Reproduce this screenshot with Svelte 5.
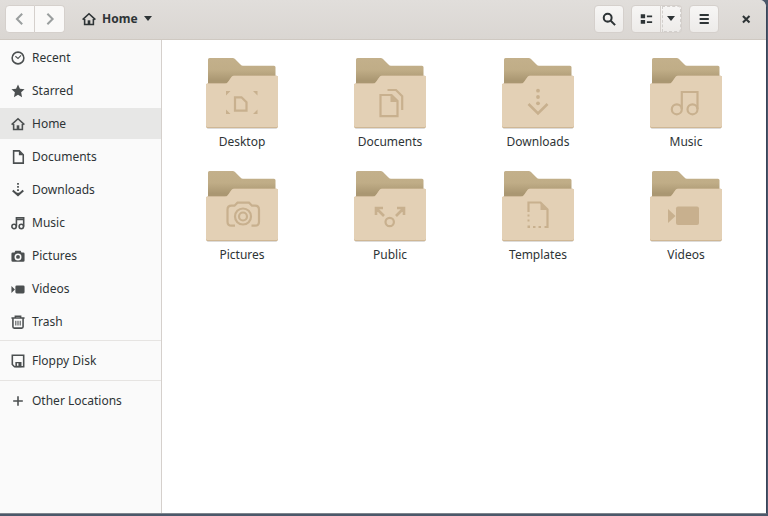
<script lang="ts">
    let current = $state("Home");

    const places = ["Recent", "Starred", "Home", "Documents", "Downloads", "Music", "Pictures", "Videos", "Trash"];
    const folders = ["Desktop", "Documents", "Downloads", "Music", "Pictures", "Public", "Templates", "Videos"];
</script>

<svelte:head><title>Home</title></svelte:head>

{#snippet icon(name: string)}
    <svg class="icon" viewBox="0 0 16 16" aria-hidden="true">
        {#if name == "Recent"}
            <circle cx="8" cy="8" r="6.7" class="line"/>
            <path d="M5 6l3 2.5L11.5 5" class="line thin"/>
        {:else if name == "Starred"}
            <path d="M8 .5l2.2 4.8 5.3.6-3.9 3.6 1 5.5L8 12.4 3.4 15l1-5.5L.5 5.9l5.3-.6z"/>
        {:else if name == "Home"}
            <path d="M.7 8.8L8 2l7.3 6.8M3 8v6.3h10V8" class="line"/>
            <path d="M6.5 14V9.5h3V14z"/>
        {:else if name == "Documents"}
            <path d="M3 1h6.5L14 5.5V15H3z" class="line"/>
            <path d="M9 1v5h5z"/>
        {:else if name == "Downloads"}
            <path d="M7 0h2v2H7zM7 3.500h2v2H7zM7 7h2v2H7z"/>
            <path d="M2 8.500l6 5.500 6-5.500" class="line bold"/>
            <path d="M5.500 11h5L8 14z"/>
        {:else if name == "Music"}
            <circle cx="3.5" cy="12" r="2.5" class="line"/>
            <circle cx="11.8" cy="12" r="2.5" class="line"/>
            <path d="M6.2 12V2h8.300v10M6.200 4h8" class="line"/>
        {:else if name == "Pictures"}
            <path fill-rule="evenodd" d="M5 2h6l1 2h2q1.500 0 1.500 1.500V13q0 1.500-1.500 1.500H2Q.5 14.500.5 13V5.500Q.5 4 2 4h2zM8 5a4 4 0 1 0 0 8 4 4 0 0 0 0-8z"/>
            <circle cx="8" cy="9" r="2.2"/>
        {:else if name == "Videos"}
            <rect x="5" y="4" width="10.5" height="9" rx="1.5"/>
            <path d="M.5 4.500v8L4.500 8.500z"/>
        {:else if name == "Trash"}
            <path d="M.5 3.500h15M5 3V1.500h6V3M2.200 4v9.500q0 1.500 1.500 1.500h8.600q1.500 0 1.500-1.500V4" class="line"/>
            <path d="M5.500 6.500v5.500M8 6.500v5.500M10.500 6.500v5.500" class="line thin"/>
        {:else if name == "Floppy Disk"}
            <path d="M1.500 1.500h13v13H4l-2.500-2.500z" class="line"/>
            <path fill-rule="evenodd" d="M5 9h7v6H5zM6.800 10.500v3h1.700v-3z"/>
        {:else if name == "Other Locations"}
            <path d="M8 2.500v11M2.500 8h11" class="line"/>
        {/if}
    </svg>
{/snippet}

{#snippet emblem(name: string)}
    <g class="emblem">
        {#if name == "Desktop"}
            <path class="solid" d="M20 34h4.500L20 38.500zM51.500 34H47l4.500 4.500zM20 57h4.500L20 52.500zM51.500 57H47l4.500-4.500z"/>
            <path d="M29 40.300h6.500l5 5v8.400H29z"/>
        {:else if name == "Documents"}
            <path d="M26.500 38h11l6 6v15.200h-17z"/>
            <path class="solid" d="M36.500 38v7h7z"/>
            <path d="M33.500 33h8.500l6.200 6.200V53"/>
        {:else if name == "Downloads"}
            <circle class="solid" cx="36" cy="33.7" r="1.9"/>
            <circle class="solid" cx="36" cy="40" r="1.9"/>
            <circle class="solid" cx="36" cy="46.3" r="1.9"/>
            <path class="thick" d="M26.500 47l9.500 9.500 9.500-9.500"/>
        {:else if name == "Music"}
            <circle cx="26.8" cy="52.3" r="5"/>
            <circle cx="42.5" cy="52.3" r="5"/>
            <path d="M31.800 52V35h15.700v17"/>
        {:else if name == "Pictures"}
            <path d="M29 55.700h-3.500q-4 0-4-4v-12q0-4 4-4h3l3-3h11.500l3 3h3q4 0 4 4v12q0 4-4 4h-3.500"/>
            <circle cx="37" cy="46.5" r="8"/>
            <circle cx="37" cy="46.5" r="4"/>
        {:else if name == "Public"}
            <circle cx="35.7" cy="52" r="4.2"/>
            <path class="thick" d="M22 45v-7h7M22 38l8 8M50 45v-7h-7M50 38l-8 8"/>
        {:else if name == "Templates"}
            <path d="M26.500 42v-9.500h12l7 7V57h-3"/>
            <path class="solid" d="M38.500 32v8h7zM25.500 44.500h2v2h-2zM25.500 49.500h2v2h-2zM25.500 55.500h2.500v2.500h-2.500zM31 56h2.500v2H31zM36.500 56h2.500v2h-2.500z"/>
        {:else}
            <rect class="solid" x="26" y="36.5" width="23" height="18.5" rx="2"/>
            <path class="solid" d="M18 39l7.500 7-7.500 7z"/>
        {/if}
    </g>
{/snippet}

{#snippet place(name: string)}
    <li>
        <a href="#{name}" class:current={current == name} onclick={() => current = name}>
            {@render icon(name)}
            {name}
        </a>
    </li>
{/snippet}

<div class="window">
    <header>
        <div class="linked">
            <button disabled aria-label="Back"><svg class="icon" viewBox="0 0 16 16"><path d="M10.500 2L4.500 8l6 6" class="line bold"/></svg></button>
            <button disabled aria-label="Forward"><svg class="icon" viewBox="0 0 16 16"><path d="M5 2l6 6-6 6" class="line bold"/></svg></button>
        </div>
        <button class="path">
            {@render icon("Home")}
            Home
            <svg class="arrow" viewBox="0 0 8 5"><path d="M0 0h8L4 5z"/></svg>
        </button>

        <div class="tools">
            <button aria-label="Search">
                <svg class="icon" viewBox="0 0 16 16"><circle cx="6.5" cy="6.5" r="4.5" class="line bold"/><path d="M10 10l5 5" class="line bold"/></svg>
            </button>
            <div class="linked">
                <button aria-label="List view">
                    <svg class="icon" viewBox="0 0 16 16"><path d="M2 2.500h5v4.500H2zM2 9h5v4.500H2zM9 4h6v2H9zM9 10.500h6v2H9z"/></svg>
                </button>
                <button class="narrow" aria-label="View options"><svg class="arrow" viewBox="0 0 8 5"><path d="M0 0h8L4 5z"/></svg></button>
            </div>
            <button aria-label="Menu">
                <svg class="icon" viewBox="0 0 16 16"><path d="M3 3.500h10.500M3 8h10.500M3 12.500h10.500" class="line bold"/></svg>
            </button>
            <button class="close" aria-label="Close">
                <svg class="icon" viewBox="0 0 16 16"><path d="M4.500 4.500l7.500 7.500M12 4.500L4.500 12" class="line bold"/></svg>
            </button>
        </div>
    </header>

    <div class="content">
        <nav>
            <ul>
                {#each places as name}
                    {@render place(name)}
                {/each}
            </ul>
            <ul>{@render place("Floppy Disk")}</ul>
            <ul>{@render place("Other Locations")}</ul>
        </nav>

        <main>
            {#each folders as name}
                <a class="folder" href="#{name}">
                    <svg viewBox="0 0 72 72" aria-hidden="true">
                        <defs>
                            <linearGradient id="back" x2="0" y2="1">
                                <stop offset="0" stop-color="#c3b08b"/>
                                <stop offset=".2" stop-color="#c0ad87"/>
                                <stop offset=".38" stop-color="#aa9772"/>
                            </linearGradient>
                        </defs>
                        <path d="M1 69h70v2q0 1-1 1H2q-1 0-1-1z" fill="#dddbd9"/>
                        <path d="M2 28V2.500Q2 1 3.500 1H26.500q1.500 0 2.500 1l5.500 5.500q1 1.200 2.500 1.200h31q1.500 0 1.500 1.500V60H2z" fill="url(#back)"/>
                        <path d="M0 28q0-1.500 1.500-1.500H19q2 0 3-1.500l3.500-5q1-1.200 2.500-1.200h42.500q1.500 0 1.500 1.500V69.500q0 1.500-1.500 1.500h-69Q0 71 0 69.500z" fill="#cfb795"/>
                        <path d="M0 28q0-1.500 1.500-1.500H19q2 0 3-1.500l3.500-5q1-1.200 2.500-1.200h42.500q1.500 0 1.500 1.500V68.500q0 1.500-1.500 1.500h-69Q0 70 0 68.500z" fill="#e3d0b5"/>
                        {@render emblem(name)}
                    </svg>
                    <span>{name}</span>
                </a>
            {/each}
        </main>
    </div>
</div>

<style>
    :global(body){
        margin: 0;
        background-color: #4b586a;
    }

    .window{
        display: flex;
        flex-direction: column;
        box-sizing: border-box;
        min-height: calc(100vh - 2px);
        margin-right: 1px;
        border-right: 1px solid #39445a;
        border-bottom: 1px solid #80868e;
        border-radius: 0 7px 0 0;
        overflow: hidden;
        background-color: #ffffff;
        color: #2e3436;
        font-family: "Noto Sans", "Open Sans", sans-serif;
        font-size: 12px;
        line-height: 16px;
    }

    a{
        color: inherit;
        text-decoration: none;
    }

    /* icons */
    .icon{
        width: 14px;
        height: 14px;
        flex: none;
        fill: currentColor;
    }

    .arrow{
        width: 8px;
        height: 5px;
        fill: currentColor;
    }

    .line{
        fill: none;
        stroke: currentColor;
        stroke-width: 1.8;
    }

    .thin{
        stroke-width: 1.2;
    }

    .bold{
        stroke-width: 2.3;
    }

    /* header bar */
    header{
        display: flex;
        align-items: center;
        box-sizing: border-box;
        height: 40px;
        padding: 0 5px 2px 5px;
        border-bottom: 1px solid #cfc9c2;
        background: linear-gradient(#e1dedb, #dad6d2);
    }

    button{
        display: flex;
        align-items: center;
        justify-content: center;
        width: 30px;
        height: 28px;
        padding: 0;
        border: 1px solid #d5d0cc;
        border-radius: 4px;
        background: linear-gradient(#f7f6f5, #edebe9);
        color: inherit;
        font: inherit;
    }

    button:disabled{
        background: #faf9f8;
        color: #9a9e9e;
    }

    .linked{
        display: flex;
    }

    .linked button:first-child{
        border-radius: 4px 0 0 4px;
    }

    .linked button:last-child{
        border-left: none;
        border-radius: 0 4px 4px 0;
    }

    .linked .narrow{
        width: 21px;
        outline: 1px dashed #d2cfcc;
        outline-offset: -2px;
    }

    .path{
        gap: 6px;
        width: auto;
        margin-left: 17px;
        border: none;
        background: none;
        font-weight: bold;
    }

    .tools{
        display: flex;
        gap: 7px;
        margin-left: auto;
    }

    .close{
        margin-left: 5px;
        border: none;
        background: none;
    }

    /* sidebar */
    .content{
        display: flex;
        flex: 1;
    }

    nav{
        flex: none;
        width: 161px;
        border-right: 1px solid #d5d0cc;
        background-color: #fafafa;
    }

    ul{
        display: flex;
        flex-direction: column;
        gap: 2px;
        margin: 0;
        padding: 4px 0;
        list-style: none;
    }

    ul:first-child{
        padding: 2px 0 3px;
    }

    ul + ul{
        border-top: 1px solid #e6e4e2;
    }

    nav a{
        display: flex;
        align-items: center;
        gap: 7px;
        height: 31px;
        padding-left: 11px;
    }

    nav .icon{
        color: #4b4f50;
    }

    nav .current{
        background-color: #e7e7e6;
    }

    /* folders */
    main{
        display: grid;
        flex: 1;
        grid-template-columns: repeat(4, 1fr);
        align-content: start;
        gap: 20px 0;
        padding: 17px 6px;
    }

    .folder{
        display: flex;
        flex-direction: column;
        align-items: center;
        gap: 5px;
    }

    .folder svg{
        width: 72px;
        height: 72px;
    }

    .emblem{
        fill: none;
        stroke: #c8b08e;
        stroke-width: 2.2;
    }

    .thick{
        stroke-width: 2.6;
    }

    .solid{
        fill: #c8b08e;
        stroke: none;
    }
</style>
